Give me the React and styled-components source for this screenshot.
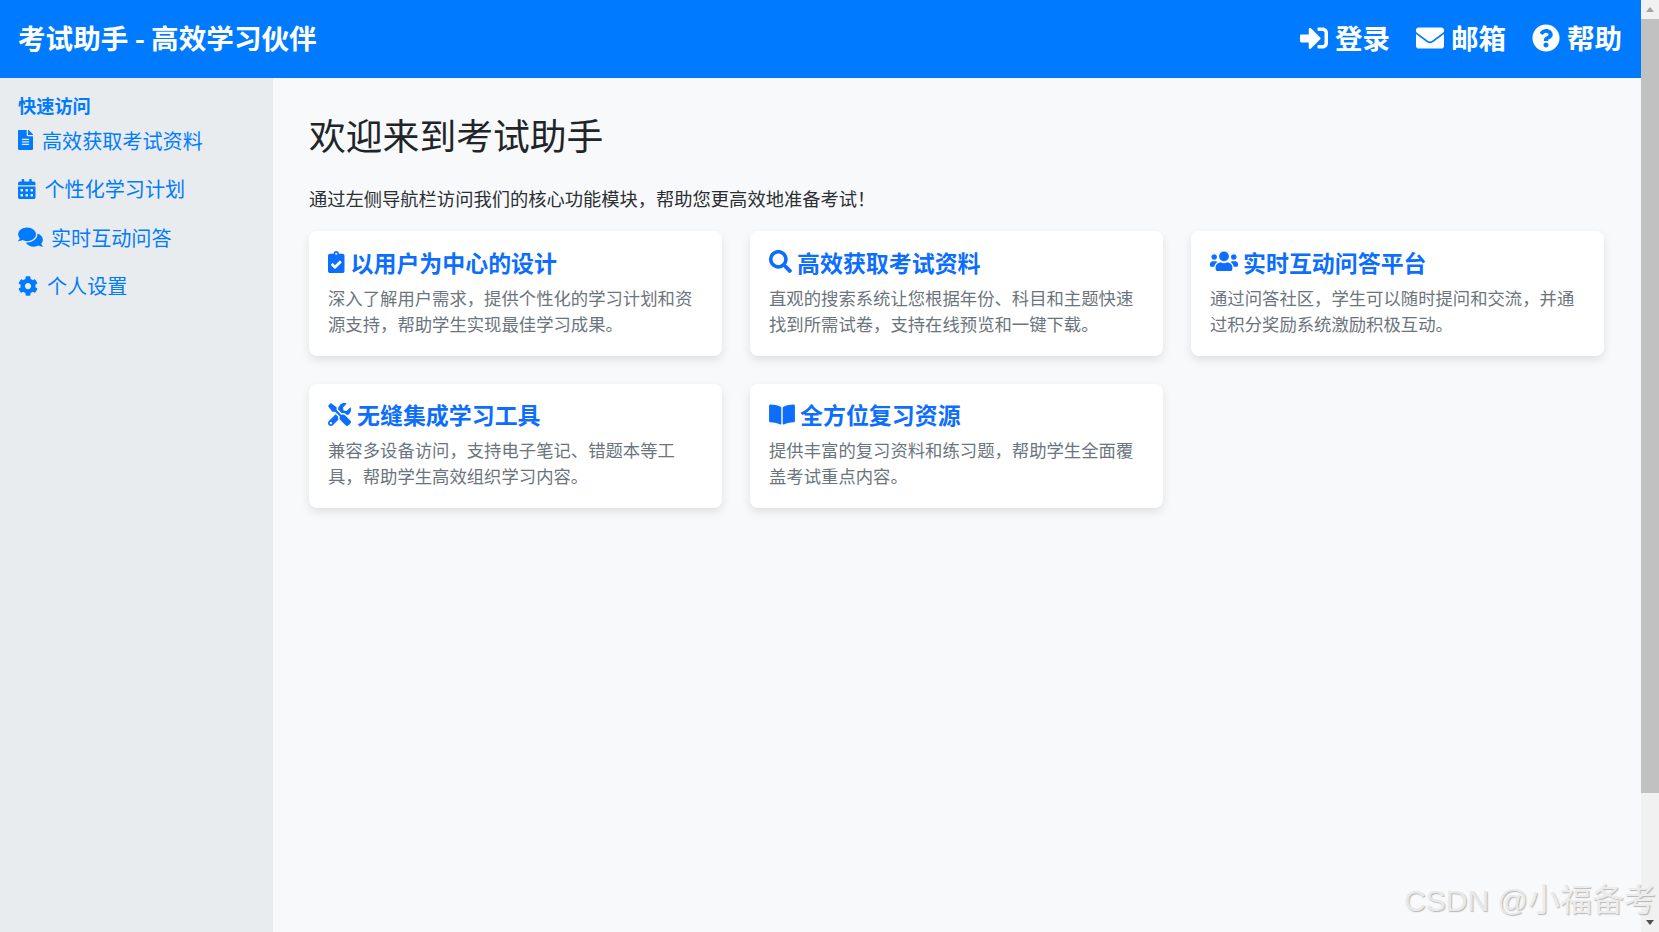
import React from "react";
import styled, { createGlobalStyle } from "styled-components";
import {
  FaSignInAlt,
  FaEnvelope,
  FaQuestionCircle,
  FaFileAlt,
  FaCalendarAlt,
  FaComments,
  FaCog,
  FaClipboardCheck,
  FaSearch,
  FaUsers,
  FaTools,
  FaBookOpen,
} from "react-icons/fa";

const navItems = [
  { icon: FaSignInAlt, label: "登录" },
  { icon: FaEnvelope, label: "邮箱" },
  { icon: FaQuestionCircle, label: "帮助" },
];

const sideLinks = [
  { icon: FaFileAlt, label: "高效获取考试资料", w: 15, h: 20, gap: 9 },
  { icon: FaCalendarAlt, label: "个性化学习计划", w: 17.5, h: 20, gap: 9 },
  { icon: FaComments, label: "实时互动问答", w: 25, h: 22, gap: 8 },
  { icon: FaCog, label: "个人设置", w: 20, h: 20, gap: 9 },
];

const features = [
  {
    icon: FaClipboardCheck,
    w: 16.5,
    h: 22,
    gap: 6,
    title: "以用户为中心的设计",
    text: "深入了解用户需求，提供个性化的学习计划和资源支持，帮助学生实现最佳学习成果。",
  },
  {
    icon: FaSearch,
    w: 23,
    h: 23,
    gap: 5,
    title: "高效获取考试资料",
    text: "直观的搜索系统让您根据年份、科目和主题快速找到所需试卷，支持在线预览和一键下载。",
  },
  {
    icon: FaUsers,
    w: 28,
    h: 22.4,
    gap: 5,
    title: "实时互动问答平台",
    text: "通过问答社区，学生可以随时提问和交流，并通过积分奖励系统激励积极互动。",
  },
  {
    icon: FaTools,
    w: 23,
    h: 23,
    gap: 6,
    title: "无缝集成学习工具",
    text: "兼容多设备访问，支持电子笔记、错题本等工具，帮助学生高效组织学习内容。",
  },
  {
    icon: FaBookOpen,
    w: 26,
    h: 23,
    gap: 5,
    title: "全方位复习资源",
    text: "提供丰富的复习资料和练习题，帮助学生全面覆盖考试重点内容。",
  },
];

const App = () => {
  return (
    <>
      <GlobalStyle />
      <Page>
        <Content>
          <Header>
            <Brand>考试助手 - 高效学习伙伴</Brand>
            <Nav>
              {navItems.map(({ icon: Icon, label }) => (
                <NavLink key={label}>
                  <Icon size={28} />
                  {label}
                </NavLink>
              ))}
            </Nav>
          </Header>
          <Body>
            <Sidebar>
              <SideTitle>快速访问</SideTitle>
              {sideLinks.map(({ icon: Icon, label, w, h, gap }) => (
                <SideLink key={label} $gap={gap} $w={w} $h={h}>
                  <Icon />
                  {label}
                </SideLink>
              ))}
            </Sidebar>
            <Main>
              <Heading>欢迎来到考试助手</Heading>
              <Intro>通过左侧导航栏访问我们的核心功能模块，帮助您更高效地准备考试！</Intro>
              <CardGrid>
                {features.map(({ icon: Icon, w, h, gap, title, text }) => (
                  <Card key={title}>
                    <CardTitle $gap={gap} $w={w} $h={h}>
                      <Icon />
                      {title}
                    </CardTitle>
                    <CardText>{text}</CardText>
                  </Card>
                ))}
              </CardGrid>
            </Main>
          </Body>
        </Content>
        <Scrollbar>
          <ArrowUp />
          <Thumb />
          <ArrowDown />
        </Scrollbar>
        <Watermark>
          CSDN @<WatermarkName>小福备考</WatermarkName>
        </Watermark>
      </Page>
    </>
  );
};

export default App;

const GlobalStyle = createGlobalStyle`
  html, body {
    margin: 0;
    padding: 0;
    height: 100%;
    overflow: hidden;
  }
  body {
    font-family: "Noto Sans CJK SC", "Liberation Sans", sans-serif;
  }
`;

const Page = styled.div`
  position: relative;
  display: flex;
  width: 1659px;
  height: 932px;
  overflow: hidden;
  background: #f8f9fa;
`;

const Content = styled.div`
  flex: 1;
  display: flex;
  flex-direction: column;
  min-width: 0;
`;

const Header = styled.header`
  box-sizing: border-box;
  height: 78px;
  flex-shrink: 0;
  display: flex;
  align-items: center;
  justify-content: space-between;
  padding: 0 19px 3px 18px;
  background: #007bff;
  color: #ffffff;
`;

const Brand = styled.div`
  font-size: 27.6px;
  font-weight: 700;
  line-height: 1;
`;

const Nav = styled.nav`
  display: flex;
  gap: 26px;
`;

const NavLink = styled.div`
  display: flex;
  align-items: center;
  gap: 7px;
  font-size: 27.5px;
  font-weight: 700;
  line-height: 1;
`;

const Body = styled.div`
  flex: 1;
  display: flex;
  min-height: 0;
`;

const Sidebar = styled.aside`
  width: 273px;
  flex-shrink: 0;
  box-sizing: border-box;
  padding: 15px 18px;
  background: #e9ecef;
`;

const SideTitle = styled.div`
  font-size: 18.2px;
  font-weight: 700;
  line-height: 24px;
  color: #007bff;
  margin-bottom: 9px;
`;

const SideLink = styled.div`
  display: flex;
  align-items: center;
  gap: ${(props) => props.$gap}px;
  height: 28px;
  margin-bottom: 20.5px;
  font-size: 20.1px;
  color: #007bff;

  svg {
    width: ${(props) => props.$w}px;
    height: ${(props) => props.$h}px;
    flex-shrink: 0;
  }
`;

const Main = styled.main`
  flex: 1;
  min-width: 0;
  padding: 34px 37px 0 36px;
`;

const Heading = styled.h1`
  margin: 0 0 29px;
  font-size: 36.8px;
  font-weight: 400;
  line-height: 44px;
  color: #212529;
`;

const Intro = styled.p`
  margin: 0 0 19px;
  font-size: 18.28px;
  line-height: 27px;
  color: #2b2f33;
`;

const CardGrid = styled.div`
  display: grid;
  grid-template-columns: repeat(3, 1fr);
  gap: 28px;
`;

const Card = styled.section`
  box-sizing: border-box;
  height: 124.5px;
  padding: 15.5px 19px 0;
  background: #ffffff;
  border-radius: 8px;
  box-shadow: 0 4px 10px rgba(0, 0, 0, 0.1);
`;

const CardTitle = styled.h3`
  display: flex;
  align-items: center;
  gap: ${(props) => props.$gap}px;
  margin: 0 0 8px;
  font-size: 22.95px;
  font-weight: 700;
  line-height: 30px;
  color: #0d6efd;

  svg {
    width: ${(props) => props.$w}px;
    height: ${(props) => props.$h}px;
    flex-shrink: 0;
  }
`;

const CardText = styled.p`
  margin: 0;
  font-size: 17.35px;
  line-height: 26px;
  color: #6c757d;
`;

const Scrollbar = styled.div`
  width: 18px;
  flex-shrink: 0;
  background: #f1f1f1;
  display: flex;
  flex-direction: column;
  align-items: center;
`;

const Thumb = styled.div`
  width: 100%;
  height: 774px;
  background: #c1c1c1;
`;

const ArrowUp = styled.div`
  width: 0;
  height: 0;
  margin: 7px 0 7px;
  border-left: 4px solid transparent;
  border-right: 4px solid transparent;
  border-bottom: 5px solid #a3a3a3;
`;

const ArrowDown = styled.div`
  width: 0;
  height: 0;
  margin-top: auto;
  margin-bottom: 7px;
  border-left: 4px solid transparent;
  border-right: 4px solid transparent;
  border-top: 5px solid #505050;
`;

const Watermark = styled.div`
  position: absolute;
  right: 3px;
  bottom: 11px;
  font-family: "Liberation Sans", "Noto Sans CJK SC", sans-serif;
  font-size: 30px;
  line-height: 40px;
  white-space: nowrap;
  color: #e9e9e9;
  text-shadow: 1px 1px 1px rgba(120, 120, 120, 0.5);
  pointer-events: none;
`;

const WatermarkName = styled.span`
  font-size: 32px;
  color: #ececec;
`;
